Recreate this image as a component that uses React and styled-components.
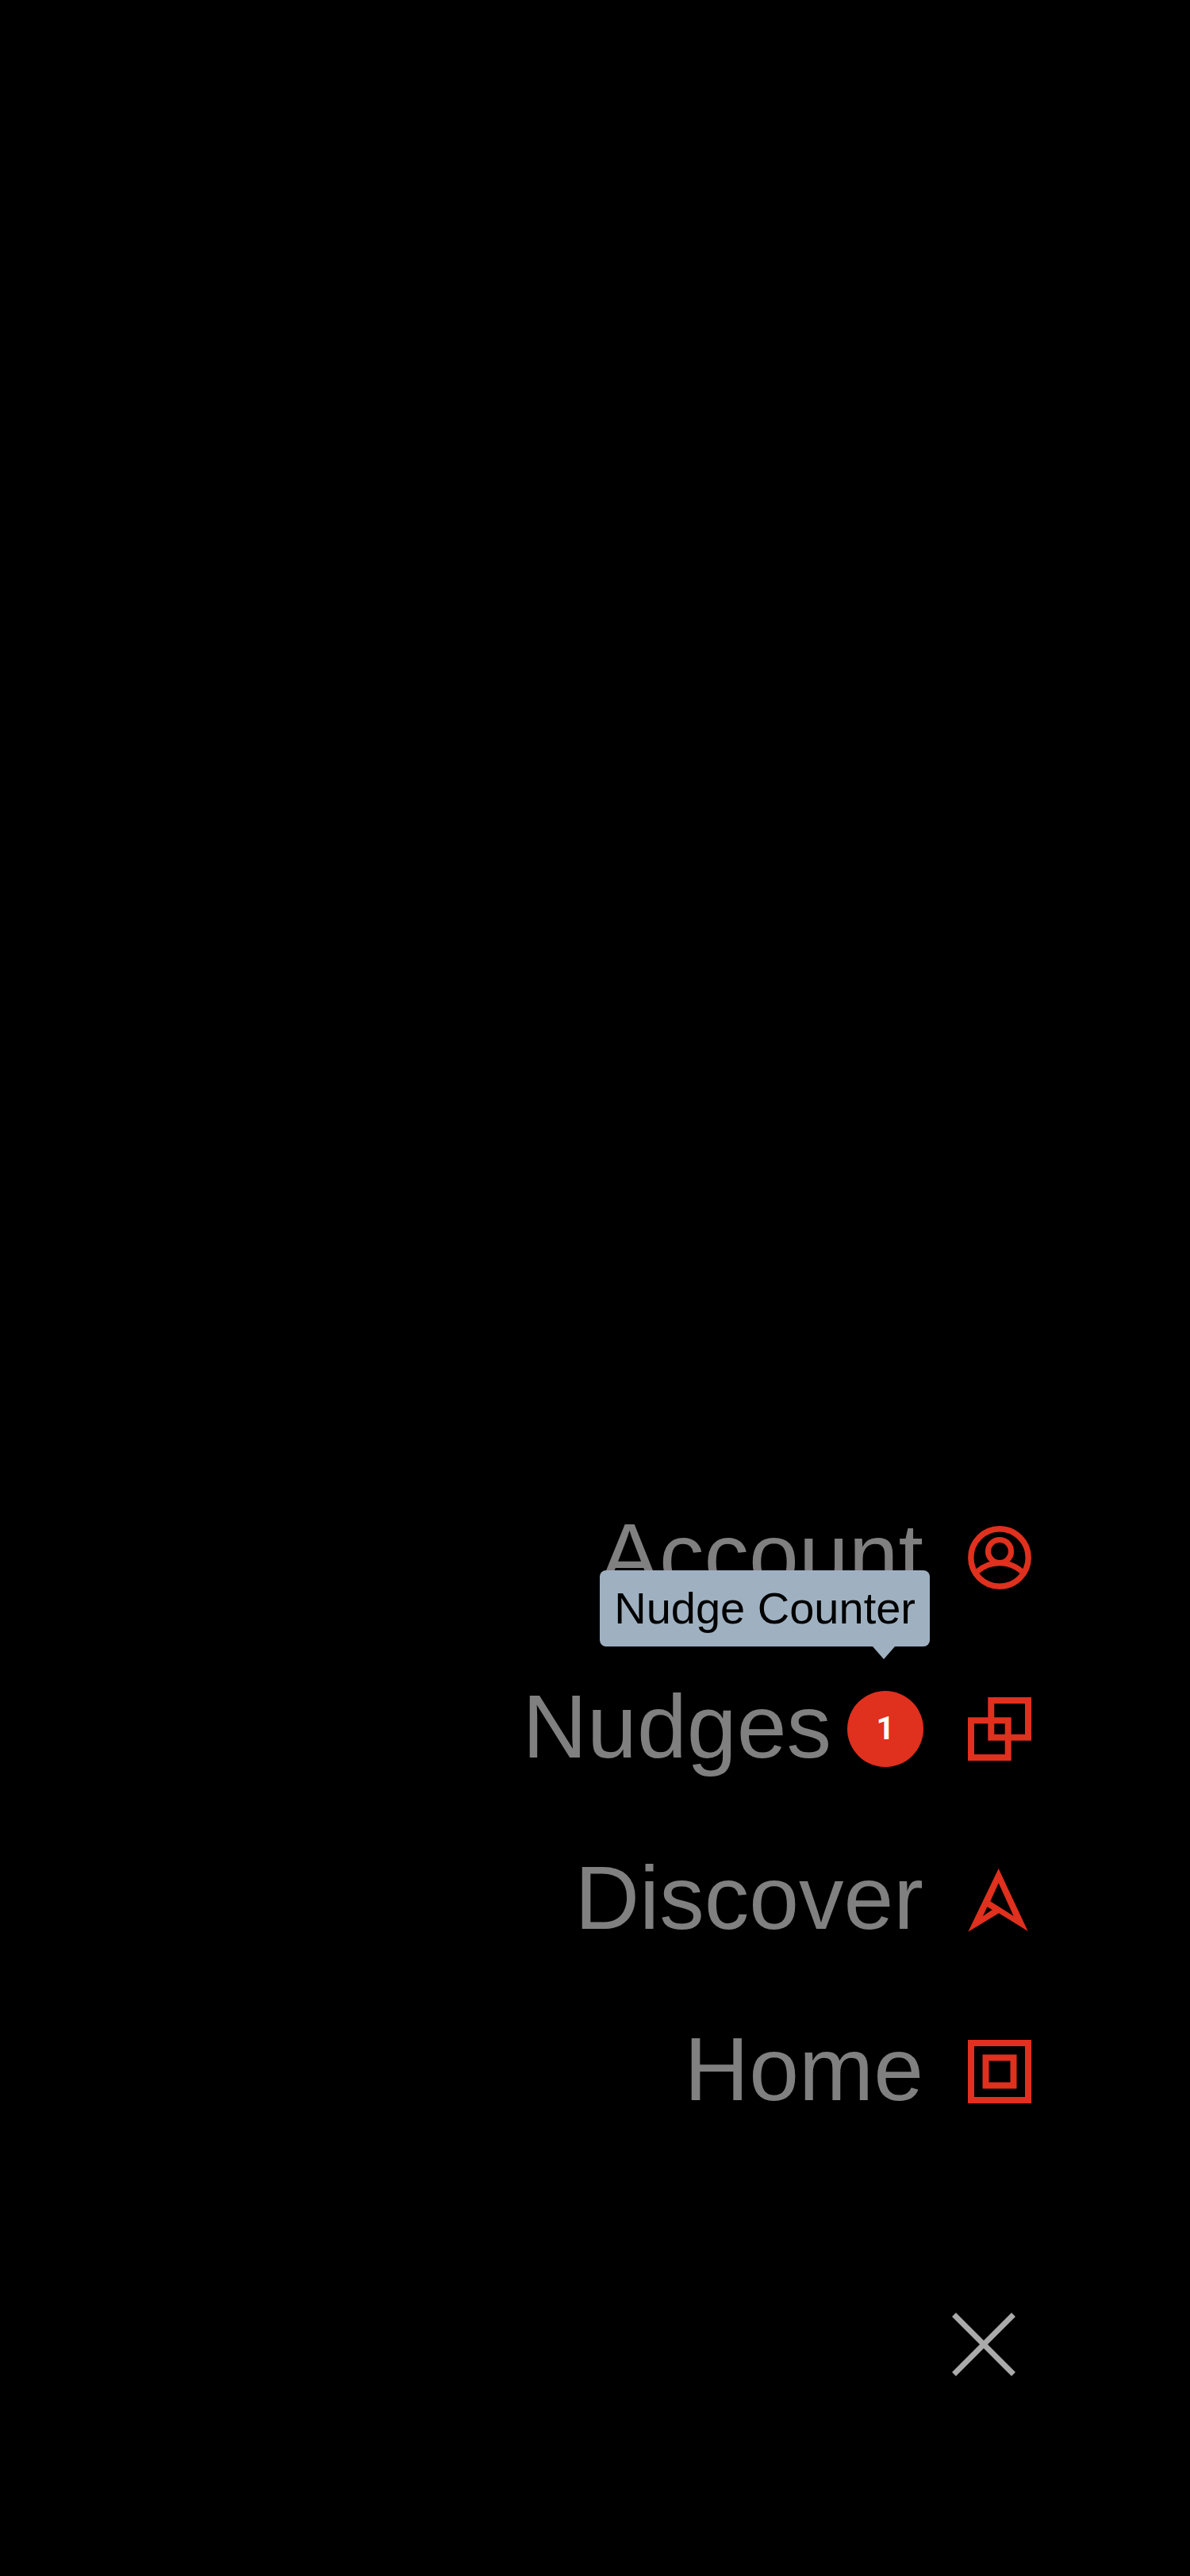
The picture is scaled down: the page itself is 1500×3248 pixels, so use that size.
import React from "react";
import styled, { createGlobalStyle } from "styled-components";

const RED = "#e0301e";
const SLATE = "#9fb1c1";

const GlobalStyle = createGlobalStyle`
  *, *::before, *::after { box-sizing: border-box; }
  body {
    margin: 0;
    background: #000;
    font-family: "Liberation Sans", Arial, sans-serif;
  }
`;

const Screen = styled.main`
  min-height: 100vh;
  display: flex;
  flex-direction: column;
  justify-content: flex-end;
  align-items: flex-end;
  gap: 236px;
  padding: 0 200px 252px 0;
  background: #000;
`;

const MenuList = styled.ul`
  display: flex;
  flex-direction: column;
  align-items: flex-end;
  gap: 80px;
  margin: 0;
  padding: 0;
  list-style: none;
`;

const MenuLink = styled.a`
  display: flex;
  align-items: center;
  gap: 56px;
  color: #808080;
  text-decoration: none;
`;

const LabelGroup = styled.span`
  display: flex;
  align-items: center;
  gap: 20px;
`;

const Label = styled.span`
  padding-bottom: 6px;
  font-size: 113px;
  line-height: 130px;
  white-space: nowrap;
`;

const Icon = styled.svg`
  display: block;
  flex: none;
  width: 80px;
  height: 80px;
  fill: none;
  stroke: ${(p) => p.$color};
  stroke-width: 8;
`;

const Badge = styled.span`
  position: relative;
  display: flex;
  align-items: center;
  justify-content: center;
  width: 96px;
  height: 96px;
  border-radius: 50%;
  background: ${RED};
  color: #fff;
  font-family: Roboto, sans-serif;
  font-size: 40px;
  font-weight: 700;
  line-height: 48px;
`;

const Tooltip = styled.span`
  position: absolute;
  right: -8px;
  bottom: calc(100% + 56px);
  padding: 0 18px;
  border-radius: 8px;
  background: ${SLATE};
  color: #000;
  font-family: "Liberation Sans", Arial, sans-serif;
  font-size: 56px;
  font-weight: 400;
  line-height: 96px;
  white-space: nowrap;

  &::after {
    content: "";
    position: absolute;
    top: 100%;
    right: 44px;
    border: 14px solid transparent;
    border-top: 16px solid ${SLATE};
    border-bottom: 0;
  }
`;

const CloseButton = styled.button`
  display: block;
  margin: 0 20px 0 0;
  padding: 0;
  border: 0;
  background: none;
  cursor: pointer;
`;

const AccountIcon = () => (
  <Icon $color={RED} viewBox="0 0 80 80" aria-hidden="true">
    <circle cx="40" cy="40" r="36.2" strokeWidth="7.4" />
    <circle cx="40" cy="32" r="14.5" strokeWidth="7.2" />
    <path d="M11.5 57.8A42 42 0 0 1 68.5 57.8" strokeWidth="7" />
  </Icon>
);

const NudgesIcon = () => (
  <Icon $color={RED} viewBox="0 0 80 80" aria-hidden="true">
    <rect x="29.3" y="4" width="46.7" height="46.7" />
    <rect x="4" y="29.3" width="46.7" height="46.7" />
  </Icon>
);

const DiscoverIcon = () => (
  <Icon $color="none" viewBox="0 0 80 80" aria-hidden="true">
    <path
      fill={RED}
      fillRule="evenodd"
      d="M38.7 0L75.7 79L39 56.3L.3 79.7ZM38.7 18.3L28.3 41.3L57.7 60ZM24.3 48.3L30.7 52L19 60Z"
    />
  </Icon>
);

const HomeIcon = () => (
  <Icon $color={RED} viewBox="0 0 80 80" aria-hidden="true">
    <rect x="4" y="4" width="72" height="72" />
    <rect x="22.5" y="22.5" width="35" height="35" />
  </Icon>
);

const items = [
  { label: "Account", href: "#account", Glyph: AccountIcon },
  { label: "Nudges", href: "#nudges", Glyph: NudgesIcon, count: 1, hint: "Nudge Counter" },
  { label: "Discover", href: "#discover", Glyph: DiscoverIcon },
  { label: "Home", href: "#home", Glyph: HomeIcon },
];

export default function App() {
  return (
    <>
      <GlobalStyle />
      <Screen>
        <nav>
          <MenuList>
            {items.map(({ label, href, Glyph, count, hint }) => (
              <li key={label}>
                <MenuLink href={href}>
                  <LabelGroup>
                    <Label>{label}</Label>
                    {count && (
                      <Badge>
                        {count}
                        <Tooltip role="tooltip">{hint}</Tooltip>
                      </Badge>
                    )}
                  </LabelGroup>
                  <Glyph />
                </MenuLink>
              </li>
            ))}
          </MenuList>
        </nav>
        <CloseButton type="button" aria-label="Close menu">
          <Icon $color="#aaaaaa" viewBox="0 0 80 80" aria-hidden="true">
            <path d="M2.5 2.5L77.5 77.5M77.5 2.5L2.5 77.5" strokeWidth="7" />
          </Icon>
        </CloseButton>
      </Screen>
    </>
  );
}
